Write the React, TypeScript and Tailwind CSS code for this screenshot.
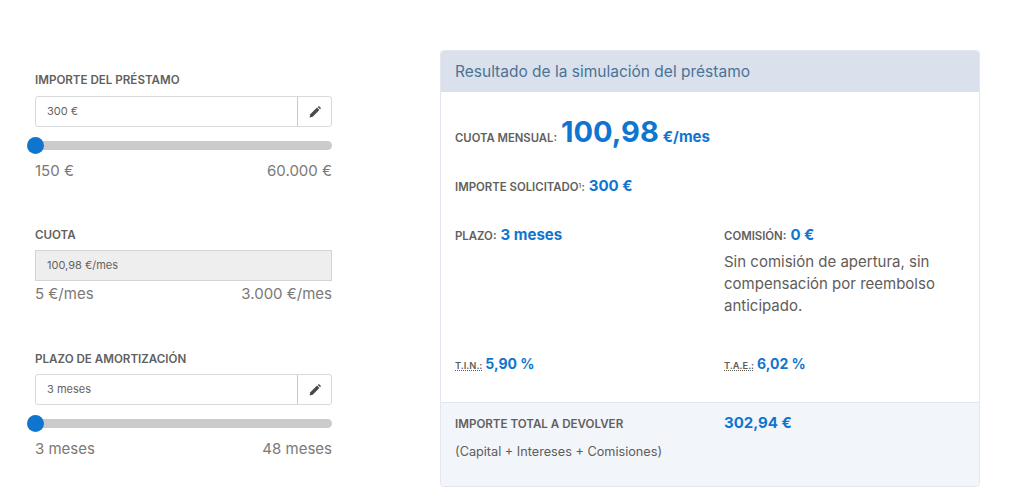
const font = { fontFamily: "Inter, 'Noto Sans', sans-serif" };

function Label({ children, className = "text-[11.6px]" }: { children: React.ReactNode; className?: string }) {
  return <span className={`font-semibold text-[#625f5d] ${className}`}>{children}</span>;
}

function Value({ children, className = "text-[15px]" }: { children: React.ReactNode; className?: string }) {
  return <span className={`font-bold text-[#0f75cf] ${className}`}>{children}</span>;
}

function PencilIcon() {
  return (
    <svg width="12" height="12" viewBox="0 0 12 12" className="text-[#4a4a4a]" fill="currentColor">
      <path d="M0.6 11.4 L1.3 8.3 L8 1.6 L10.4 4 L3.7 10.7 Z" />
      <path d="M8.7 0.9 L9.4 0.3 Q9.8 0 10.2 0.3 L11.7 1.8 Q12 2.2 11.7 2.6 L11.1 3.3 Z" />
    </svg>
  );
}

function EditField({ value }: { value: string }) {
  return (
    <div className="flex h-[31px] rounded-[3px] border border-[#d9d9d9] bg-white">
      <div className="flex-1 pl-[11px] text-[11px] leading-[29px] text-[#66625f]">{value}</div>
      <div className="flex w-[34px] items-center justify-center border-l border-[#c9c9c9]">
        <PencilIcon />
      </div>
    </div>
  );
}

function Slider() {
  return (
    <div className="relative mt-[14px] h-[9px] rounded-full bg-[#cbcbcb]">
      <div className="absolute left-[-8px] top-[-4px] h-[17px] w-[17px] rounded-full bg-[#0f75cf]" />
    </div>
  );
}

function Range({ min, max }: { min: string; max: string }) {
  return (
    <div className="flex justify-between text-[15px] leading-5 text-[#7b7876]">
      <span>{min}</span>
      <span>{max}</span>
    </div>
  );
}

export default function App() {
  return (
    <div className="flex h-[501px] w-[1024px] overflow-hidden bg-white pl-[35px] pt-[50px]" style={font}>
      <div className="w-[297px] pt-[20px]">
        <div className="mb-[10px] h-4 leading-4"><Label>IMPORTE DEL PRÉSTAMO</Label></div>
        <EditField value="300 €" />
        <Slider />
        <div className="mt-[11px]"><Range min="150 €" max="60.000 €" /></div>

        <div className="mb-[9px] mt-[44px] h-4 leading-4"><Label>CUOTA</Label></div>
        <div className="h-[31px] border border-[#d4d4d4] bg-[#eeeeee] pl-[11px] text-[11px] leading-[29px] text-[#66625f]">100,98 €/mes</div>
        <div className="mt-[3px]"><Range min="5 €/mes" max="3.000 €/mes" /></div>

        <div className="mb-[9px] mt-[45px] h-4 leading-4"><Label>PLAZO DE AMORTIZACIÓN</Label></div>
        <EditField value="3 meses" />
        <Slider />
        <div className="mt-[11px]"><Range min="3 meses" max="48 meses" /></div>
      </div>

      <div className="ml-[108px] flex h-[437px] w-[540px] flex-col overflow-hidden rounded-[4px] border border-[#e2e6ee]">
        <div className="h-[41px] bg-[#dbe1ec] pl-[14px] text-[15.5px] leading-[41px] text-[#4a7396]">Resultado de la simulación del préstamo</div>

        <div className="flex-1 bg-white pl-[14px]">
          <div className="mt-[20px] flex h-[40px] items-baseline">
            <Label className="text-[11.3px]">CUOTA MENSUAL:</Label>
            <Value className="ml-1 text-[29px] leading-[40px]">100,98</Value>
            <Value className="ml-[4px] text-[15px]">€/mes</Value>
          </div>
          <div className="mt-[23px] flex h-5 items-baseline">
            <Label className="text-[11.4px]">IMPORTE SOLICITADO<sup className="text-[6px]">1</sup>:</Label>
            <Value className="ml-1 text-[15px]">300 €</Value>
          </div>

          <div className="mt-[29px] grid h-[110px] grid-cols-[269px_1fr]">
            <div className="flex h-5 items-baseline">
              <Label className="text-[11.4px]">PLAZO:</Label>
              <Value className="ml-1 text-[15px]">3 meses</Value>
            </div>
            <div>
              <div className="flex h-5 items-baseline">
                <Label className="text-[11.4px]">COMISIÓN:</Label>
                <Value className="ml-1 text-[15px]">0 €</Value>
              </div>
              <p className="mt-[7px] w-[240px] text-[15px] leading-[22px] text-[#5f5c5a]">Sin comisión de apertura, sin compensación por reembolso anticipado.</p>
            </div>
          </div>

          <div className="mt-[19px] grid grid-cols-[269px_1fr]">
            <div className="flex h-5 items-baseline">
              <span className="text-[9.3px] font-semibold text-[#5f5c5a] underline decoration-dotted">T.I.N.:</span>
              <Value className="ml-[3px] text-[14px]">5,90 %</Value>
            </div>
            <div className="flex h-5 items-baseline">
              <span className="text-[9.3px] font-semibold text-[#5f5c5a] underline decoration-dotted">T.A.E.:</span>
              <Value className="ml-[3px] text-[14px]">6,02 %</Value>
            </div>
          </div>
        </div>

        <div className="grid h-[84px] grid-cols-[269px_1fr] border-t border-[#e2e6ee] bg-[#f2f5fa] pl-[14px] pt-[9px]">
          <div>
            <div className="h-5 leading-5"><Label>IMPORTE TOTAL A DEVOLVER</Label></div>
            <div className="mt-[10px] text-[12.7px] leading-5 text-[#5f5c5a]">(Capital + Intereses + Comisiones)</div>
          </div>
          <div className="h-5 leading-5"><Value className="text-[15px]">302,94 €</Value></div>
        </div>
      </div>
    </div>
  );
}
